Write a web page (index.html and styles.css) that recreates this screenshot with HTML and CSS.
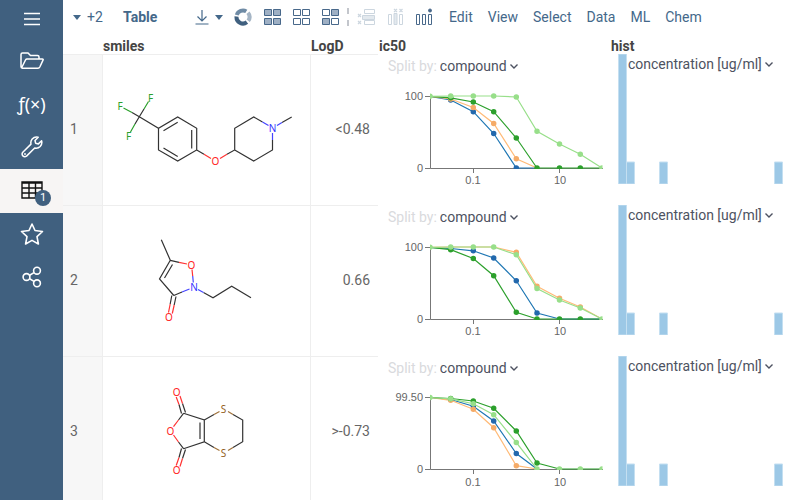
FILE: index.html
```html
<!DOCTYPE html>
<html lang="en">
<head>
<meta charset="utf-8">
<title>Table</title>
<link rel="stylesheet" href="styles.css">
</head>
<body>
<nav class="sidebar" aria-label="Main">
  <button class="side-item side-menu" aria-label="Menu"><svg width="16" height="14" viewBox="0 0 16 14"><path d="M0 1.500h16M0 7h16M0 12.500h16" stroke-width="1.500"/></svg></button>
  <button class="side-item" aria-label="Open"><svg width="24" height="18" viewBox="0 0 24 18"><path d="M1 14.800V2.500Q1 1 2.500 1H8l2.500 2.500H17.500Q19 3.500 19 5V7M1.500 16L5.500 8Q6 7 7 7H22.300Q23.600 7 23 8.200L19.800 15Q19.200 16.200 18 16.200H2.300Q1 16.200 1 14.800" stroke-width="1.500"/></svg></button>
  <button class="side-item side-fx" aria-label="Functions">ƒ(×)</button>
  <button class="side-item" aria-label="Tools"><svg width="22" height="22" viewBox="0 0 22 22"><path d="M17.200 1.300Q13.600.4 11.200 3 9.300 5.200 10 8.100L1.800 16.300Q.4 18 1.800 19.900 3.600 21.500 5.500 20.100L13.700 12Q17 12.700 19.200 10.500 21.500 8 20.600 4.700L17.400 7.900 14.600 7.200 14 4.500Z" stroke-width="1.500" stroke-linejoin="round"/><circle class="dot" cx="4" cy="18" r=".9"/></svg></button>
  <button class="side-item is-active" aria-label="Tables">
    <svg width="22" height="18" viewBox="0 0 22 18"><path d="M1 1H21V17H1ZM1 2H21M1 7H21M1 12H21M8 2V17M14.500 2V17" stroke-width="1.400"/></svg>
    <span class="badge">1</span>
  </button>
  <button class="side-item" aria-label="Favorites"><svg width="24" height="22" viewBox="0 0 24 22"><path d="M12 1L15 7.500 22.500 8.500 17 13.600 18.400 21 12 17.400 5.600 21 7 13.600 1.500 8.500 9 7.500Z" stroke-width="1.600" stroke-linejoin="round"/></svg></button>
  <button class="side-item" aria-label="Share"><svg width="20" height="22" viewBox="0 0 20 22"><g stroke-width="1.600"><circle cx="4.500" cy="11" r="3.400"/><circle cx="15" cy="4.700" r="3.400"/><circle cx="15" cy="17.300" r="3.400"/><path d="M7.600 9.200L12 6.600M7.600 12.800L12 15.400"/></g></svg></button>
</nav>

<main class="main">
  <header class="toolbar">
    <button class="tool tool-more"><svg width="8" height="5" viewBox="0 0 8 5"><path d="M0 0H8L4 5Z" fill="#44688a"/></svg>+2</button>
    <h1 class="title">Table</h1>
    <div class="icons">
      <button class="tool tool-download" aria-label="Download">
        <svg width="14" height="16" viewBox="0 0 14 16"><path d="M7 1V11.500M2.500 7.500L7 12 11.500 7.500M.5 15H13.500" fill="none" stroke="#44688a" stroke-width="1.200"/></svg>
        <svg width="8" height="5" viewBox="0 0 8 5"><path d="M0 0H8L4 5Z" fill="#44688a"/></svg>
      </button>
      <button class="tool" aria-label="Viewers"><svg width="18" height="18" viewBox="0 0 18 18" fill="none" stroke-width="4"><path d="M2.800 7A6.500 6.500 0 0 1 12.300 3.400" stroke="#6f8ba5"/><path d="M14 4.800A6.500 6.500 0 0 1 14.200 12.800" stroke="#a5b5c5"/><path d="M2.500 8.500A6.500 6.500 0 0 0 12.900 14.200" stroke="#40607f"/></svg></button>
      <button class="tool" aria-label="Select all"><svg width="18" height="18" viewBox="0 0 18 18" fill="#9fb0c4" stroke="#48688a"><path d="M1.500 1.500h7v6h-7zM10.500 1.500h7v6h-7zM1.500 10.500h7v6h-7zM10.500 10.500h7v6h-7z"/></svg></button>
      <button class="tool" aria-label="Select none"><svg width="18" height="18" viewBox="0 0 18 18" fill="#fff" stroke="#48688a"><path d="M1.500 1.500h7v6h-7zM10.500 1.500h7v6h-7zM1.500 10.500h7v6h-7zM10.500 10.500h7v6h-7z"/></svg></button>
      <button class="tool" aria-label="Invert selection"><svg width="18" height="18" viewBox="0 0 18 18" fill="#fff" stroke="#48688a"><path d="M1.500 1.500h7v6h-7zM10.500 10.500h7v6h-7z"/><path fill="#9fb0c4" d="M10.500 1.500h7v6h-7zM1.500 10.500h7v6h-7z"/></svg></button>
      <span class="divider"></span>
      <button class="tool" aria-label="Remove rows" disabled><svg width="18" height="18" viewBox="0 0 18 18" fill="#e3e9ee" stroke="#ccd6df"><path fill="#fff" d="M7.500 1.500h10v4h-10z"/><path d="M5.500 7.500h12v4h-12z"/><path fill="#fff" d="M7.500 12.500h10v4h-10z"/><path d="M1 6l3 3M4 6l-3 3M1 13l3 3M4 13l-3 3" stroke-width="1.200"/></svg></button>
      <button class="tool" aria-label="Remove columns" disabled><svg width="18" height="18" viewBox="0 0 18 18" fill="#fff" stroke="#ccd6df"><path d="M2.500 6.500h3v10h-3zM13.500 6.500h3v10h-3z"/><path fill="#e3e9ee" d="M8 5.500h3v11h-3z"/><path d="M8 1l3 3M11 1l-3 3M13.500 1l3 3M16.500 1l-3 3" stroke-width="1.200"/></svg></button>
      <button class="tool" aria-label="Add column"><svg width="18" height="18" viewBox="0 0 18 18" fill="#fff" stroke="#48688a"><path d="M1.500 6.500h3v10h-3zM7.500 6.500h3v10h-3zM13.500 6.500h3v10h-3z"/><circle cx="15" cy="2.500" r="1.500" fill="#48688a"/></svg></button>
    </div>
    <nav class="menu" aria-label="Table menu"><a href="#">Edit</a><a href="#">View</a><a href="#">Select</a><a href="#">Data</a><a href="#">ML</a><a href="#">Chem</a></nav>
  </header>

  <table class="grid">
    <colgroup><col class="c-num"><col class="c-smiles"><col class="c-logd"><col class="c-ic50"><col></colgroup>
    <thead><tr><td></td><th>smiles</th><th>LogD</th><th>ic50</th><th>hist</th></tr></thead>
    <tbody>
      <tr>
        <td class="num">1</td>
        <td class="mol"><svg width="207" height="150" viewBox="103 55 207 150" role="img" aria-label="Molecule 1">
          <path d="M139.300 116.700L158.500 128.300 177.700 117 196.700 128.300V150L177.700 161 158.500 150V128.300M163.500 130.700L177.700 122.300M191.700 130V148.500M163.500 148L177.700 156.500M196.700 150L204 154.300M227 154.300L234.700 150V128.300L253.700 117 262.500 122M272.500 140V150L253.700 161 234.700 150M282 122.500L291.700 117M139.300 116.700L132 112.500M139.300 116.700L144 109M139.300 116.700L135 124"/>
          <path class="f" d="M132 112.500L123.500 108M144 109L148.500 101.500M135 124L130.500 132"/>
          <path class="o" d="M204 154.300L211 158.500M220 158.500L227 154.300"/>
          <path class="n" d="M262.500 122L268.500 125.500M272.500 133V140M277 125.500L282 122.500"/>
          <text class="f" x="120" y="109.500">F</text><text class="f" x="150.500" y="101.500">F</text><text class="f" x="128.500" y="140">F</text><text class="o" x="215.500" y="165">O</text><text class="n" x="272.500" y="132">N</text>
        </svg></td>
        <td class="logd">&lt;0.48</td>
        <td class="ic50"><div class="chart">
          <label class="pick"><span>Split by:</span><select><option>compound</option></select><svg width="8" height="5" viewBox="0 0 8 5"><path d="M.5.5L4 4 7.500.5"/></svg></label>
          <svg class="curves" width="232" height="124" viewBox="0 27 232 124">
            <path class="axis" d="M52.500 42V114.500H225M47 42.500H52.500M47 114.500H52.500M95.500 114.500V119M181.500 114.500V119"/>
            <text class="end" x="45" y="46">100</text><text class="end" x="45" y="118">0</text><text x="95" y="130">0.1</text><text x="182" y="130">10</text>
            <svg x="52" y="30" width="172.500" height="85" viewBox="52 30 172.500 85">
              <g class="blue"><polyline points="52,42.300 72.700,46 95.300,57.700 115.700,79.500 138.300,114 159,114"/><path d="M72.700 46h0M95.300 57.700h0M115.700 79.500h0M138.300 114h0"/></g>
              <g class="orange"><polyline points="52,42.300 72.700,45 95.300,53.500 115.700,69.500 138.300,104.700 159,114"/><path d="M72.700 45h0M95.300 53.500h0M115.700 69.500h0M138.300 104.700h0"/></g>
              <g class="green"><polyline points="52,42.300 72.700,43.800 95.300,48 115.700,57.700 138.300,84 159,114 224,114"/><path d="M72.700 43.800h0M95.300 48h0M115.700 57.700h0M138.300 84h0M159 114h0M181.500 114h0M202.300 114h0"/></g>
              <g class="light"><polyline points="52,42.300 72.700,42 95.300,42 115.700,42 138.300,43 159,77.200 181.500,90 202.300,100.200 224,114"/><path d="M52 42.300h0M72.700 42h0M95.300 42h0M115.700 42h0M138.300 43h0M159 77.200h0M181.500 90h0M202.300 100.200h0M224 114h0"/></g>
            </svg>
          </svg>
        </div></td>
        <td class="hist"><div class="plot">
          <svg width="174" height="130" viewBox="0 0 174 130"><path d="M.5 0h8V130h-8zM8.500 108h8v22h-8zM41.500 108h8v22h-8zM156.500 108h8v22h-8z"/></svg>
          <label class="pick"><select aria-label="Histogram column"><option>concentration [ug/ml]</option></select><svg width="8" height="5" viewBox="0 0 8 5"><path d="M.5.5L4 4 7.500.5"/></svg></label>
        </div></td>
      </tr>
      <tr>
        <td class="num">2</td>
        <td class="mol"><svg width="207" height="150" viewBox="103 206 207 150" role="img" aria-label="Molecule 2">
          <path d="M161.300 239.700L170.300 260.300 159.500 279 173.800 295.500M164.500 278L172.500 264.500M170.300 260.300L179 262.300M173.800 295.500L182 292M203.500 292.500L213 297.700 231.700 286.300 251 297.700M171.800 295.500L170.200 304M176 296.500L174.200 305"/>
          <path class="o" d="M179 262.300L187 264M192 269.500L192.700 276M170.200 304L168.500 312.500M174.200 305L172.300 313.500"/>
          <path class="n" d="M192.700 276L193.300 282.500M182 292L189.500 289M198 289.500L203.500 292.500"/>
          <text class="o" x="191.500" y="268.500">O</text><text class="n" x="194" y="290.500">N</text><text class="o" x="169" y="321">O</text>
        </svg></td>
        <td class="logd">0.66</td>
        <td class="ic50"><div class="chart">
          <label class="pick"><span>Split by:</span><select><option>compound</option></select><svg width="8" height="5" viewBox="0 0 8 5"><path d="M.5.5L4 4 7.500.5"/></svg></label>
          <svg class="curves" width="232" height="124" viewBox="0 27 232 124">
            <path class="axis" d="M52.500 42V114.500H225M47 42.500H52.500M47 114.500H52.500M95.500 114.500V119M181.500 114.500V119"/>
            <text class="end" x="45" y="46">100</text><text class="end" x="45" y="118">0</text><text x="95" y="130">0.1</text><text x="182" y="130">10</text>
            <svg x="52" y="30" width="172.500" height="85" viewBox="52 30 172.500 85">
              <g class="blue"><polyline points="52,42.300 72.700,43.500 95.300,45.800 115.700,53 138.300,75.800 159,108 181.500,114 224,114"/><path d="M72.700 43.500h0M95.300 45.800h0M115.700 53h0M138.300 75.800h0M159 108h0"/></g>
              <g class="orange"><polyline points="52,42.300 72.700,42 95.300,42 115.700,42 138.300,47.300 159,81.300 181.500,93.200 202.300,102 224,114"/><path d="M138.300 47.300h0M159 81.300h0M181.500 93.200h0M202.300 102h0"/></g>
              <g class="green"><polyline points="52,42.300 72.700,44.700 95.300,53.500 115.700,70.700 138.300,107.300 159,114 224,114"/><path d="M72.700 44.700h0M95.300 53.500h0M115.700 70.700h0M138.300 107.300h0M159 114h0M181.500 114h0M202.300 114h0"/></g>
              <g class="light"><polyline points="52,42.300 72.700,42 95.300,42 115.700,42 138.300,49.700 159,83.500 181.500,95 202.300,103 224,114"/><path d="M52 42.300h0M72.700 42h0M95.300 42h0M115.700 42h0M138.300 49.700h0M159 83.500h0M181.500 95h0M202.300 103h0M224 114h0"/></g>
            </svg>
          </svg>
        </div></td>
        <td class="hist"><div class="plot">
          <svg width="174" height="130" viewBox="0 0 174 130"><path d="M.5 0h8V130h-8zM8.500 108h8v22h-8zM41.500 108h8v22h-8zM156.500 108h8v22h-8z"/></svg>
          <label class="pick"><select aria-label="Histogram column"><option>concentration [ug/ml]</option></select><svg width="8" height="5" viewBox="0 0 8 5"><path d="M.5.5L4 4 7.500.5"/></svg></label>
        </div></td>
      </tr>
      <tr>
        <td class="num">3</td>
        <td class="mol"><svg width="207" height="150" viewBox="103 357 207 150" role="img" aria-label="Molecule 3">
          <path d="M183.500 413.300L204.300 420V441.700L183.500 448.700M200 422.500V439M204.300 420L214 414.500M204.300 441.700L214 447.500M233 414.500L242.700 420V441.700L233 447.500M183.500 413.300L178.500 420M183.500 448.700L178.500 442M181.500 413.500L179 404.500M185.500 412.500L182.500 403.500M181.500 448.500L179 457.500M185.500 449.500L182.500 458.500"/>
          <path class="o" d="M178.500 420L173.500 426.700M178.500 442L173.500 435M179 404.500L176.200 397M182.500 403.500L180 396M179 457.500L176.200 465.500M182.500 458.500L180 466.500"/>
          <path class="s" d="M214 414.500L219.500 411.500M214 447.500L219.500 450.500M228 411.500L233 414.500M228 450.500L233 447.500"/>
          <text class="o" x="176.700" y="396">O</text><text class="o" x="170.500" y="434.500">O</text><text class="o" x="176.700" y="473.500">O</text><text class="s" x="223.500" y="413">S</text><text class="s" x="223.500" y="457">S</text>
        </svg></td>
        <td class="logd">&gt;-0.73</td>
        <td class="ic50"><div class="chart">
          <label class="pick"><span>Split by:</span><select><option>compound</option></select><svg width="8" height="5" viewBox="0 0 8 5"><path d="M.5.5L4 4 7.500.5"/></svg></label>
          <svg class="curves" width="232" height="124" viewBox="0 27 232 124">
            <path class="axis" d="M52.500 42V113.500H225M47 41.500H52.500M47 113.500H52.500M95.500 113.500V118M181.500 113.500V118"/>
            <text class="end" x="45" y="45">99.50</text><text class="end" x="45" y="117">0</text><text x="95" y="129.500">0.1</text><text x="182" y="129.500">10</text>
            <svg x="52" y="30" width="172.500" height="84" viewBox="52 30 172.500 84">
              <g class="blue"><polyline points="52,41.500 72.700,43.500 95.300,50.300 115.700,65 138.300,97.500 159,113"/><path d="M72.700 43.500h0M95.300 50.300h0M115.700 65h0M138.300 97.500h0"/></g>
              <g class="orange"><polyline points="52,41.500 72.700,44.300 95.300,53.300 115.700,71.700 138.300,109.700 159,113"/><path d="M72.700 44.300h0M95.300 53.300h0M115.700 71.700h0M138.300 109.700h0"/></g>
              <g class="green"><polyline points="52,41.500 72.700,42.500 95.300,45 115.700,52.300 138.300,75 159,107 181.500,113 224,113"/><path d="M72.700 42.500h0M95.300 45h0M115.700 52.300h0M138.300 75h0M159 107h0"/></g>
              <g class="light"><polyline points="52,41.500 72.700,42.800 95.300,47.700 115.700,58.700 138.300,86.500 159,113"/><path d="M52 41.500h0M72.700 42.800h0M95.300 47.700h0M115.700 58.700h0M138.300 86.500h0M159 113h0M181.500 113h0M202.300 113h0M224 113h0"/></g>
            </svg>
          </svg>
        </div></td>
        <td class="hist"><div class="plot">
          <svg width="174" height="130" viewBox="0 0 174 130"><path d="M.5 0h8V130h-8zM8.500 108h8v22h-8zM41.500 108h8v22h-8zM156.500 108h8v22h-8z"/></svg>
          <label class="pick"><select aria-label="Histogram column"><option>concentration [ug/ml]</option></select><svg width="8" height="5" viewBox="0 0 8 5"><path d="M.5.5L4 4 7.500.5"/></svg></label>
        </div></td>
      </tr>
    </tbody>
  </table>
</main>
</body>
</html>
```
FILE: styles.css
```css
* { box-sizing: border-box; }

body {
  margin: 0;
  height: 100vh;
  display: flex;
  overflow: hidden;
  background: #fff;
  color: #4d5261;
  font: 14px/16px Roboto, sans-serif;
}

button {
  margin: 0;
  padding: 0;
  border: 0;
  background: none;
  color: inherit;
  font: inherit;
}

svg { display: block; flex: none; }

/* Sidebar */
.sidebar {
  flex: none;
  width: 63px;
  display: flex;
  flex-direction: column;
  background: #40607f;
  color: #fff;
}

.side-item {
  position: relative;
  height: 43px;
  padding-bottom: 2px;
  display: flex;
  align-items: center;
  justify-content: center;
}

.side-menu { height: 40px; }
.side-item svg { fill: none; stroke: currentColor; }
.side-item .dot { fill: currentColor; stroke: none; }
.side-fx { font: 18px/24px "Noto Sans", sans-serif; }
.is-active { height: 44px; background: #f7f5f4; color: #111; }

.badge {
  position: absolute;
  left: 35px;
  top: 21px;
  width: 16px;
  height: 16px;
  border-radius: 50%;
  background: #40607f;
  color: #fff;
  font-size: 11px;
  text-align: center;
}

/* Toolbar */
.main { flex: 1; min-width: 0; }

.toolbar {
  display: flex;
  align-items: center;
  height: 34px;
  padding-left: 10px;
  color: #44688a;
}

.tool { display: flex; align-items: center; }
.tool-more { gap: 6px; width: 50px; }
.title { margin: 0; width: 72px; font-size: 14px; font-weight: 700; }
.icons { display: flex; align-items: center; gap: 11px; }
.tool-download { gap: 6px; }

.divider {
  height: 18px;
  margin: 0 -3px;
  border-left: 2px dashed #c3c6cc;
}

.menu { display: flex; gap: 15px; margin-left: 16px; }
.menu a { color: inherit; text-decoration: none; }

/* Grid */
.grid {
  width: 100%;
  table-layout: fixed;
  border-collapse: separate;
  border-spacing: 0;
}

.c-num { width: 39px; }
.c-smiles { width: 208px; }
.c-logd { width: 68px; }
.c-ic50 { width: 232px; }

th, td { padding: 0; }

th {
  height: 20px;
  padding: 4px 1px 0;
  color: #444;
  font-size: 14px;
  font-weight: 700;
  text-align: left;
}

tbody td { height: 151px; vertical-align: top; }

.num, .mol, .logd { border-top: 1px solid #eee; }
.mol, .logd { border-left: 1px solid #eee; }

tbody .num, tbody .logd { padding-bottom: 3px; vertical-align: middle; color: #666; }
.num { padding-left: 7px; background: #f7f7f7; }
.logd { padding-right: 8px; text-align: right; }

/* Molecules */
.mol path { fill: none; stroke: #333; stroke-width: 1.2; }
.mol text { font: 10px "Noto Sans", sans-serif; text-anchor: middle; }
.mol path.f { stroke: #2ca02c; }
.mol path.o { stroke: #f33; }
.mol path.n { stroke: #44f; }
.mol path.s { stroke: #a0713a; }
.mol text.f { fill: #2ca02c; }
.mol text.o { fill: #f22; }
.mol text.n { fill: #33f; }
.mol text.s { fill: #935f22; }

/* Column pickers */
.pick { display: flex; align-items: center; gap: 3px; }
.pick span { color: #d9dadd; }
.pick path { fill: none; stroke: #4d5261; stroke-width: 1.4; }

.pick select {
  appearance: none;
  padding: 0;
  border: 0;
  background: none;
  color: #4d5261;
  font: inherit;
}

.chart .pick { height: 24px; margin-bottom: 3px; padding-left: 10px; }

/* Dose response curves */
.curves text { fill: #666; font: 11px "Liberation Sans", sans-serif; text-anchor: middle; }
.curves .end { text-anchor: end; }
.axis { fill: none; stroke: #777; }
.curves polyline { fill: none; stroke-width: 1.2; }
.curves g path { stroke-width: 5.5; stroke-linecap: round; }
.blue { stroke: #1f77b4; }
.blue path { stroke: #2268ad; }
.orange { stroke: #ffbb78; }
.orange path { stroke: #f5ab68; }
.green { stroke: #2ca02c; }
.light { stroke: #98df8a; }

/* Histograms */
.plot { position: relative; padding-left: 8px; }
.plot > svg { fill: #9cc8e6; stroke: #c4dff1; }
.plot .pick { position: absolute; top: 2px; left: 18px; }
```
